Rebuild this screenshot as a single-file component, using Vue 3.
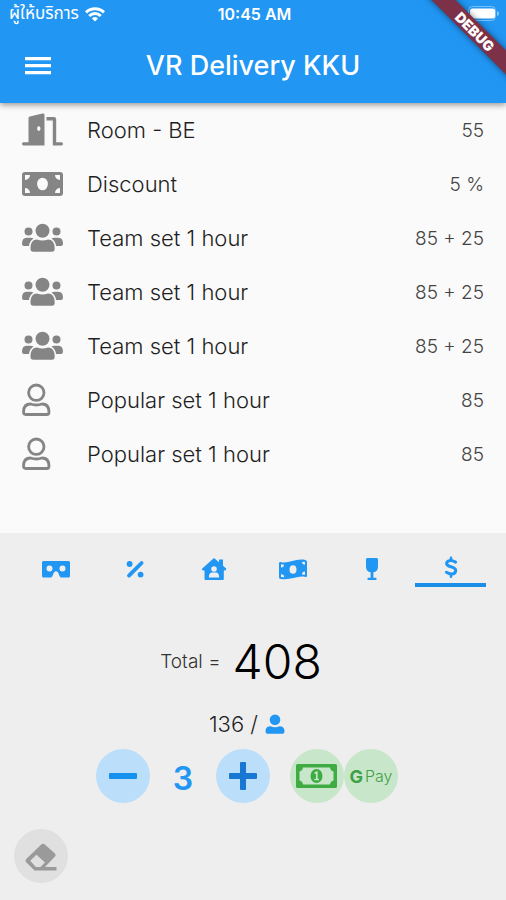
<script setup>
import { ref, computed } from 'vue'

const items = [
  { icon: 'door', label: 'Room - BE', value: '55' },
  { icon: 'cash', label: 'Discount', value: '5 %' },
  { icon: 'team', label: 'Team set 1 hour', value: '85 + 25' },
  { icon: 'team', label: 'Team set 1 hour', value: '85 + 25' },
  { icon: 'team', label: 'Team set 1 hour', value: '85 + 25' },
  { icon: 'person', label: 'Popular set 1 hour', value: '85' },
  { icon: 'person', label: 'Popular set 1 hour', value: '85' }
]
const tabs = ['headset', 'percent', 'house', 'notes', 'glass', 'dollar']
const active = ref('dollar')
const people = ref(3)
const total = 408
const share = computed(() => Math.round(total / people.value))
</script>

<template>
  <div class="app">
    <header class="header">
      <div class="status">
        <div class="carrier">
          <span>ผู้ให้บริการ</span>
          <svg width="20" height="15" viewBox="0 0 20 15" fill="none" stroke="#fff" stroke-width="3">
            <path d="M1 5.400C6 .6 14 .6 19 5.400" />
            <path d="M4.200 9c3.400-3.200 8.200-3.200 11.600 0" />
            <path d="M6.900 11.400Q10 8.800 13.100 11.400L10 14.600z" fill="#fff" stroke="none" />
          </svg>
        </div>
        <span class="clock">10:45 AM</span>
        <svg class="battery" width="32" height="16" viewBox="0 0 32 16">
          <rect x=".5" y=".5" width="27" height="14" rx="4" fill="none" stroke="#fff" stroke-opacity=".4" />
          <rect x="2" y="2.500" width="25" height="10" rx="2.500" fill="#fff" />
          <path d="M29 5q2 .5 2 2.500t-2 2.500z" fill="#fff" fill-opacity=".5" />
        </svg>
      </div>
      <div class="bar">
        <button class="menu" type="button" aria-label="Menu">
          <svg width="26" height="18" viewBox="0 0 26 18" fill="#fff">
            <path d="M0 0h26v3.200H0zM0 7h26v3.200H0zM0 14h26v3.200H0z" />
          </svg>
        </button>
        <h1>VR Delivery KKU</h1>
      </div>
      <div class="corner"><span class="ribbon">DEBUG</span></div>
    </header>

    <ul class="list">
      <li v-for="(item, i) in items" :key="i" class="row">
        <svg class="row-icon" width="42" height="34" viewBox="0 0 42 34" fill="#858585">
          <template v-if="item.icon === 'door'">
            <path fill-rule="evenodd" d="M6.500 5Q6.500 3.800 7.800 3.400L20.500 .6Q22.500 .2 22.500 2V32.500H1.500Q0 32.500 0 30.800T1.500 29.200H6.500zM16.800 13.300a1.700 2.300 0 1 0 0 4.600a1.700 2.300 0 1 0 0-4.600z" />
            <path d="M24.500 4H32Q34.200 4 34.200 6.200V29.200H39.500Q41 29.200 41 30.800T39.500 32.500H30.800V7.400H24.500z" />
          </template>
          <template v-else-if="item.icon === 'cash'">
            <rect x="0" y="5" width="41" height="24" rx="3" />
            <ellipse cx="20.500" cy="17" rx="5.400" ry="6.300" fill="#fafafa" />
            <path fill="#fafafa" d="M3 8h5a5 5 0 0 1-5 5zM38 8h-5a5 5 0 0 0 5 5zM3 26h5a5 5 0 0 0-5-5zM38 26h-5a5 5 0 0 1 5-5z" />
          </template>
          <template v-else-if="item.icon === 'team'">
            <circle cx="20.500" cy="9.700" r="7" />
            <circle cx="6.500" cy="10.500" r="4" />
            <circle cx="34.500" cy="10.500" r="4" />
            <path d="M8.500 27.500C8.500 21.500 11 18.500 15 18.500Q20.500 20.600 26 18.500C30 18.500 32.700 21.500 32.700 27.500Q32.700 30.800 30 30.800H11.200Q8.500 30.800 8.500 27.500z" />
            <path d="M0 22.700Q0 16.700 4.500 16.700H8.500Q10.200 16.700 11.500 17.500Q7.500 20 7 25H2Q0 25 0 22.700zM41 22.700Q41 16.700 36.500 16.700H32.500Q30.800 16.700 29.500 17.500Q33.500 20 34 25H39Q41 25 41 22.700z" />
          </template>
          <template v-else>
            <g fill="none" stroke="#858585" stroke-width="2.800">
              <circle cx="14.300" cy="9.700" r="7.700" />
              <path d="M1.500 29Q1.500 21 8.600 21Q14.300 23 20 21Q27 21 27 29Q27 31.500 24.800 31.500H3.700Q1.500 31.500 1.500 29z" />
            </g>
          </template>
        </svg>
        <span class="label">{{ item.label }}</span>
        <span class="value">{{ item.value }}</span>
      </li>
    </ul>

    <section class="panel">
      <nav class="tabs">
        <button
          v-for="tab in tabs"
          :key="tab"
          type="button"
          class="tab"
          :class="{ active: tab === active }"
          :aria-label="tab"
          @click="active = tab"
        >
          <svg width="28" height="28" viewBox="0 0 28 28" fill="#2196f3">
            <path
              v-if="tab === 'headset'"
              fill-rule="evenodd"
              d="M1.500 6H26.500Q28 6 28 7.500V21Q28 22.500 26.500 22.500H19.500Q18.300 22.500 17.800 21.400L16 17.600Q14 14.800 12 17.600L10.200 21.400Q9.700 22.500 8.500 22.500H1.500Q0 22.500 0 21V7.500Q0 6 1.500 6zM7.500 10.400a3 3 0 1 0 0 6a3 3 0 1 0 0-6zM20.500 10.400a3 3 0 1 0 0 6a3 3 0 1 0 0-6z"
            />
            <template v-else-if="tab === 'percent'">
              <circle cx="8.600" cy="9" r="2.900" />
              <circle cx="19.600" cy="19.600" r="2.900" />
              <path d="M8 20.600L20.600 8" fill="none" stroke="#2196f3" stroke-width="3.800" stroke-linecap="round" />
            </template>
            <template v-else-if="tab === 'house'">
              <path d="M14 3L19 7.300V4.600H23V10.800L26.200 13.600Q26.500 15.400 24.800 15.400H23.800V24Q23.800 25 22.800 25H5.500Q4.500 25 4.500 24V15.400H3.200Q1.500 15.400 2 13.800z" />
              <circle cx="14" cy="14" r="2.800" fill="#eee" />
              <path d="M8.800 22.500Q9 17.600 12 17.600H16Q19 17.600 19.200 22.500z" fill="#eee" />
            </template>
            <template v-else-if="tab === 'notes'">
              <path d="M0 8.300Q0 6.700 1.500 7C9 9.300 17 2.800 26.300 5Q28 5.400 28 6.800V20.700Q28 22.300 26.500 22C19 20 11 25.800 1.700 24Q0 23.600 0 22.200z" />
              <ellipse cx="14" cy="14.500" rx="3.500" ry="4.300" fill="#eee" />
              <path fill="#eee" d="M2 9.300l3 .4a3 3 0 0 1-3 2.800zM26 7l-3-.2a3 3 0 0 0 3 3zM2 22l3.200 .2a3 3 0 0 0-3.200-3zM26 19.800l-3-.2a3 3 0 0 1 3-3z" />
            </template>
            <path
              v-else-if="tab === 'glass'"
              d="M9 3H19L20 4V11.500Q20 16.500 15.400 17.300V22.800H18.400V25H9.600V22.800H12.600V17.300Q8 16.500 8 11.500V4z"
            />
            <g v-else fill="none" stroke="#2196f3" stroke-width="3" stroke-linecap="round">
              <path d="M14 2.800V5.200M14 19.200V21.800" stroke-width="2.600" />
              <path d="M18.600 7.100C14 4.600 9.700 5.300 9.600 8.500C9.500 12.800 18.800 10.600 18.700 15.600C18.500 19.500 13.500 20 9.400 17.300" />
            </g>
          </svg>
        </button>
      </nav>

      <div class="total">
        <span class="total-label">Total =</span>
        <output class="total-value">{{ total }}</output>
      </div>

      <div class="share">
        <span>{{ share }} /</span>
        <svg width="20" height="20" viewBox="0 0 20 20" fill="#2196f3">
          <circle cx="10" cy="5.800" r="5.300" />
          <path d="M.5 17.500Q.5 12.300 5.500 12.300Q10 14.300 14.500 12.300Q19.500 12.300 19.500 17.500Q19.500 19.700 17.500 19.700H2.500Q.5 19.700 .5 17.500z" />
        </svg>
      </div>

      <div class="actions">
        <button class="round blue" type="button" aria-label="Remove person" @click="people = Math.max(1, people - 1)">
          <svg width="28" height="28" viewBox="0 0 28 28" fill="#1592f0">
            <rect x="0" y="11" width="28" height="6" rx="1" />
          </svg>
        </button>
        <output class="count">{{ people }}</output>
        <button class="round blue" type="button" aria-label="Add person" @click="people++">
          <svg width="28" height="28" viewBox="0 0 28 28" fill="#1976d2">
            <rect x="0" y="11" width="28" height="6" rx="1" />
            <rect x="11" y="0" width="6" height="28" rx="1" />
          </svg>
        </button>
        <div class="pay">
          <button class="round green" type="button" aria-label="Cash">
            <svg width="42" height="26" viewBox="0 0 42 26">
              <path fill="#3eac43" fill-rule="evenodd" d="M1.500 1H39.500Q41 1 41 2.500V23.500Q41 25 39.500 25H1.500Q0 25 0 23.500V2.500Q0 1 1.500 1zM7 4.500Q6.500 8 3.500 8.500V17.500Q6.500 18 7 21.500H34Q34.500 18 37.500 17.500V8.500Q34.500 8 34 4.500z" />
              <ellipse cx="20.500" cy="13" rx="6" ry="7" fill="#3eac43" />
              <path d="M18.500 10.300L20.800 9.300V16.200M18.300 16.500H23" fill="none" stroke="#c8e6c9" stroke-width="1.700" />
            </svg>
          </button>
          <button class="round green gpay" type="button"><b>G</b><span>Pay</span></button>
        </div>
      </div>

      <button class="round grey" type="button" aria-label="Clear">
        <svg width="34" height="30" viewBox="0 0 34 30">
          <path d="M2.500 17.800L17.500 3.300Q19 2 20.500 3.300L31 12.500Q32.500 14 31 15.500L21 26H32.500V29.500H10.500L2.500 21.500Q.5 19.500 2.500 17.800z" fill="#9a9a9a" />
          <path d="M6.200 19.700L12.500 13.700L21 21.600L16.400 26H11.800z" fill="#e0e0e0" />
        </svg>
      </button>
    </section>
  </div>
</template>

<style>
body {
  margin: 0;
  background: #fafafa;
}
</style>

<style scoped>
.app {
  min-height: 100vh;
  display: flex;
  flex-direction: column;
  font-family: Inter, "Noto Sans", sans-serif;
  color: #1f1f1f;
  background: #fafafa;
}
button {
  border: 0;
  padding: 0;
  background: none;
  font: inherit;
  cursor: pointer;
}
svg {
  display: block;
  flex: none;
}
.header {
  position: relative;
  background: #2196f3;
  color: #fff;
  box-shadow: 0 2px 6px rgba(0, 0, 0, 0.4);
}
.status {
  height: 28px;
  padding: 0 6px 0 9px;
  display: grid;
  grid-template-columns: 1fr auto 1fr;
  align-items: center;
}
.carrier {
  display: flex;
  align-items: center;
  gap: 6px;
  font: 400 17px/28px "Liberation Sans", "Noto Sans Thai", sans-serif;
}
.clock {
  font-size: 16px;
  font-weight: 600;
}
.battery {
  justify-self: end;
}
.bar {
  height: 75px;
  padding: 0 25px;
  display: grid;
  grid-template-columns: 1fr auto 1fr;
  align-items: center;
}
.menu {
  justify-self: start;
}
h1 {
  margin: 0;
  font-size: 27px;
  font-weight: 500;
}
.corner {
  position: absolute;
  top: 0;
  right: 0;
  width: 100px;
  height: 100px;
  overflow: hidden;
  pointer-events: none;
}
.ribbon {
  position: absolute;
  top: 23px;
  left: -1px;
  width: 140px;
  transform: rotate(45deg);
  background: #7d3149;
  box-shadow: 0 0 6px rgba(0, 0, 0, 0.5);
  text-align: center;
  font-size: 14px;
  line-height: 17px;
  font-weight: 900;
}
.list {
  flex: 1;
  margin: 0;
  padding: 0 22px;
  list-style: none;
}
.row {
  height: 54px;
  display: flex;
  align-items: center;
}
.label {
  flex: 1;
  padding-left: 23px;
  font-size: 22px;
  font-weight: 300;
}
.value {
  font-size: 19px;
  font-weight: 300;
  color: #444;
}
.panel {
  background: #eee;
  padding: 22px 14px 17px;
}
.tabs {
  display: flex;
  padding: 0 2px;
}
.tab {
  flex: 1;
  margin: 0 4px;
  display: flex;
  justify-content: center;
  border-bottom: 4px solid transparent;
}
.tab.active {
  border-color: #1b8fe8;
}
.total {
  margin-top: 45px;
  height: 58px;
  padding-right: 24px;
  display: flex;
  align-items: center;
  justify-content: center;
  gap: 12px;
}
.total-label {
  font-size: 19px;
  font-weight: 300;
  color: #333;
}
.total-value {
  font-size: 48px;
  font-weight: 300;
  color: #000;
}
.share {
  margin-top: 19px;
  height: 30px;
  padding-right: 12px;
  display: flex;
  align-items: center;
  justify-content: center;
  gap: 7px;
  font-size: 22px;
  font-weight: 300;
}
.actions {
  margin-top: 10px;
  padding-right: 12px;
  display: flex;
  align-items: center;
  justify-content: center;
}
.round {
  width: 54px;
  height: 54px;
  border-radius: 50%;
  display: flex;
  align-items: center;
  justify-content: center;
}
.blue {
  background: #bbdefb;
}
.green {
  background: #c8e6c9;
}
.grey {
  margin-top: 26px;
  background: #e0e0e0;
}
.count {
  width: 66px;
  padding-top: 4px;
  text-align: center;
  font-size: 32px;
  font-weight: 600;
  color: #2196f3;
}
.pay {
  display: flex;
  margin-left: 20px;
}
.gpay {
  gap: 2px;
  color: #3fa045;
  font-size: 16px;
  font-weight: 300;
}
.gpay b {
  font-size: 18px;
  font-weight: 700;
}
</style>
